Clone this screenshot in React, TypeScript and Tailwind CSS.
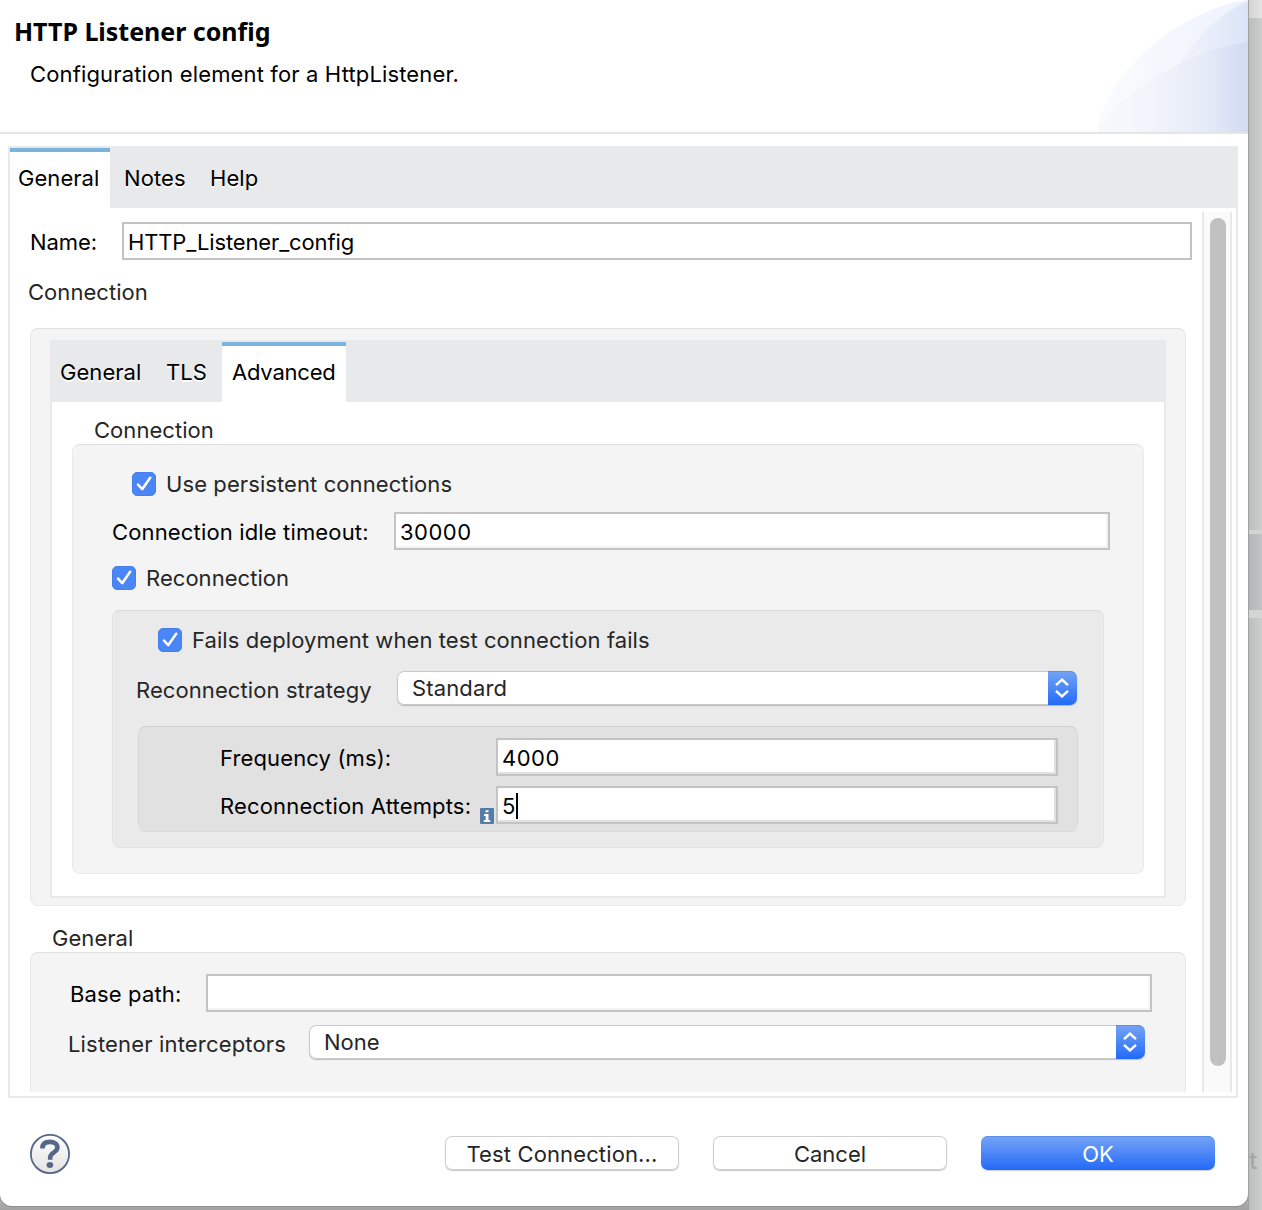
import React from "react";

function Check() {
  return (
    <span className="flex h-6 w-6 shrink-0 rounded-[5px] border border-[#4580ee] bg-[#4a86f5]">
      <svg viewBox="0 0 22 22" className="h-[22px] w-[22px]" fill="none">
        <path d="M5 13.3 L9.2 17.8 L17.2 6.6" transform="translate(0 -1)" stroke="#2f62c4" strokeOpacity="0.35" strokeWidth="2.6" strokeLinecap="round" strokeLinejoin="round" />
        <path d="M5 12.3 L9.2 16.8 L17.2 5.4" transform="translate(0 -0.6)" stroke="#fff" strokeWidth="2.6" strokeLinecap="round" strokeLinejoin="round" />
      </svg>
    </span>
  );
}

function Field({ className, inner, children }: { className: string; inner: string; children?: React.ReactNode }) {
  return (
    <div className={`flex h-[38px] shrink-0 border-2 border-[#c3c3c3] ${className}`}>
      <div className={`flex flex-1 items-center border-r-2 border-b-2 bg-white pt-1 pl-1 text-black ${inner}`}>{children}</div>
    </div>
  );
}

function Select({ className, children }: { className: string; children: React.ReactNode }) {
  return (
    <div className={`flex h-[34px] shrink-0 rounded-[7px] bg-white shadow-[0_1px_1px_rgba(0,0,0,0.22),inset_0_0_0_1px_#c9c9c9] ${className}`}>
      <div className="flex flex-1 items-center pl-[15px]">{children}</div>
      <div className="flex w-[29px] items-center justify-center rounded-r-[7px] bg-linear-to-b from-[#75a3f5] to-[#2169f7] shadow-[inset_0_1px_0_#5c8fe8]">
        <svg viewBox="0 0 14 20" className="mr-[1px] h-5 w-[14px]" fill="none" stroke="#fff" strokeWidth="2.4">
          <path d="M1 7.2 L7 1.6 L13 7.2 M1 12.8 L7 18.4 L13 12.8" />
        </svg>
      </div>
    </div>
  );
}

function Header() {
  return (
    <header className="flex h-[134px] shrink-0 justify-between border-b-2 border-[#e6e6e6]">
      <div className="text-black">
        <h1 className="mt-[13px] ml-[14px] h-9 font-['Noto_Sans'] text-[25px] leading-9 font-bold tracking-[-0.02px] whitespace-nowrap">HTTP Listener config</h1>
        <p className="mt-[11px] ml-[30px] h-7 leading-7 tracking-[0.14px] whitespace-nowrap">Configuration element for a HttpListener.</p>
      </div>
      <svg viewBox="0 0 150 132" className="h-[132px] w-[150px]">
        <defs>
          <linearGradient id="outer" x1="0" x2="1">
            <stop offset="0" stopColor="#fafbfd" />
            <stop offset="1" stopColor="#eef2fd" />
          </linearGradient>
          <linearGradient id="right" x1="0" x2="1">
            <stop offset="0" stopColor="#f4f6fc" />
            <stop offset="0.5" stopColor="#e9eefa" />
            <stop offset="1" stopColor="#dbe4f7" />
          </linearGradient>
          <linearGradient id="lower" x1="0" x2="1">
            <stop offset="0" stopColor="#f8fafc" />
            <stop offset="0.4" stopColor="#f0f3fa" />
            <stop offset="0.75" stopColor="#e3e9f7" />
            <stop offset="1" stopColor="#d1dbf2" />
          </linearGradient>
        </defs>
        <path d="M0 132 C0 85 75 10 150 0 V132 Z" fill="url(#outer)" />
        <path d="M150 1 C125 12 103 32 84 58 L70 132 H150 Z" fill="url(#right)" />
        <path d="M0 132 C0 125 5 118 14 110 C45 80 100 48 150 42 V132 Z" fill="url(#lower)" />
      </svg>
    </header>
  );
}

const group = "flex flex-col border border-[#e9e9e9] border-t-[#e0e0e0] bg-[#f4f4f4] rounded-[8px]";

function ReconnectionGroup() {
  return (
    <section className="mt-5 ml-[39px] flex h-[238px] w-[992px] flex-col rounded-[8px] border border-[#e3e3e3] border-t-[#d9d9d9] bg-[#eaeaea]">
      <div className="mt-[17px] ml-[45px] flex h-6 items-center gap-[10px]">
        <Check />
        <span className="tracking-[0.08px]">Fails deployment when test connection fails</span>
      </div>
      <div className="mt-[19px] ml-[23px] flex h-[34px]">
        <span className="mt-[5px] w-[261px] tracking-[0.09px]">Reconnection strategy</span>
        <Select className="w-[680px]"><span className="tracking-[0.15px]">Standard</span></Select>
      </div>
      <div className="mt-[21px] ml-[25px] flex h-[106px] w-[940px] flex-col rounded-[8px] border border-[#dadada] border-t-[#d0d0d0] bg-[#e1e1e1] text-black">
        <div className="mt-[11px] ml-[81px] flex h-[38px] items-center">
          <span className="w-[276px] pt-[2px] tracking-[0.13px]">Frequency (ms):</span>
          <Field className="w-[562px]" inner="border-[#e1e1e1]"><span className="tracking-[0.5px]">4000</span></Field>
        </div>
        <div className="mt-[10px] ml-[81px] flex h-[38px] items-center">
          <span className="w-[260px] pt-[2px] tracking-[0.16px]">Reconnection Attempts:</span>
          <svg viewBox="0 0 14 16" className="mt-[22px] mr-[2px] h-4 w-[14px]">
            <rect width="14" height="16" rx="1" fill="#557ba9" />
            <path d="M5.5 2.2h3v2h-3z M4 6h4.5v6h1.7v2H3.8v-2h1.9v-4H4z" fill="#fff" />
          </svg>
          <Field className="w-[562px]" inner="border-[#e1e1e1]"><span className="tracking-[0.5px]">5</span><span className="h-[26px] w-[2px] bg-black" /></Field>
        </div>
      </div>
    </section>
  );
}

function ConnectionGroup() {
  return (
    <section className={`mt-[22px] ml-5 h-[578px] w-[1156px] ${group}`}>
      <div className="mt-[11px] ml-[19px] flex h-[558px] w-[1116px] flex-col border-2 border-t-0 border-[#e8e9ea] bg-white">
        <nav className="-mx-[2px] flex h-[62px] shrink-0 bg-[#e8e9ea] pt-[2px] pl-[10px] leading-[56px] text-black">
          <span className="w-[106px] pt-[2px] tracking-[0.05px] [text-shadow:0_2px_0_#fff]">General</span>
          <span className="w-[56px] pt-[2px] tracking-[0px] [text-shadow:0_2px_0_#fff]">TLS</span>
          <span className="w-[124px] border-t-4 border-[#7ab4da] bg-white pl-[10px] leading-[52px] tracking-[-0.2px]">Advanced</span>
        </nav>
        <h3 className="mt-[14px] ml-[42px] h-7 tracking-[0.05px]">Connection</h3>
        <section className={`ml-5 h-[430px] w-[1072px] ${group}`}>
          <div className="mt-[27px] ml-[59px] flex h-6 items-center gap-[10px]">
            <Check />
            <span className="tracking-[0.09px]">Use persistent connections</span>
          </div>
          <div className="mt-4 ml-[39px] flex h-[38px] items-center text-black">
            <span className="w-[282px] pt-[2px] tracking-[0.15px]">Connection idle timeout:</span>
            <Field className="w-[716px]" inner="border-[#f4f4f4]"><span className="tracking-[0.5px]">30000</span></Field>
          </div>
          <div className="mt-4 ml-[39px] flex h-6 items-center gap-[10px]">
            <Check />
            <span className="tracking-[0.05px]">Reconnection</span>
          </div>
          <ReconnectionGroup />
        </section>
      </div>
    </section>
  );
}

function GeneralGroup() {
  return (
    <>
      <h2 className="mt-[18px] ml-[42px] h-7 tracking-[0.05px]">General</h2>
      <section className={`ml-5 h-[144px] w-[1156px] ${group}`}>
        <div className="mt-[21px] ml-[39px] flex h-[38px] items-center text-black">
          <span className="w-[136px] pt-[2px] tracking-[0.15px]">Base path:</span>
          <Field className="w-[946px]" inner="border-[#f4f4f4]" />
        </div>
        <div className="mt-[13px] ml-[37px] flex h-[34px]">
          <span className="mt-[5px] w-[241px] tracking-[0.17px]">Listener interceptors</span>
          <Select className="w-[836px]"><span className="tracking-[0px]">None</span></Select>
        </div>
      </section>
    </>
  );
}

function Footer() {
  const plain = "flex h-[34px] w-[234px] items-center justify-center rounded-[7px] bg-white pt-[2px] shadow-[0_1px_1px_rgba(0,0,0,0.22),inset_0_0_0_1px_#cfcfcf]";
  return (
    <footer className="mt-9 flex h-10 pl-[30px]">
      <button className="mr-[375px] h-10 w-10">
        <svg viewBox="0 0 40 40" className="h-10 w-10" fill="none">
          <defs>
            <linearGradient id="help" x1="0" y1="0" x2="0" y2="1">
              <stop offset="0" stopColor="#fff" />
              <stop offset="1" stopColor="#e2e2e2" />
            </linearGradient>
          </defs>
          <circle cx="20" cy="20" r="19.1" fill="url(#help)" stroke="#566787" strokeWidth="1.8" />
          <path d="M12.4 14.6 C12.4 9.8 15.6 7.9 19.8 7.9 C24.4 7.9 27.4 10 27.4 13.6 C27.4 18.6 20.2 18.6 20.2 23.2 V25.8" stroke="#566787" strokeWidth="4.6" />
          <ellipse cx="19.9" cy="31" rx="3.3" ry="2.9" fill="#566787" />
        </svg>
      </button>
      <div className="flex gap-[34px] pt-[2px]">
        <button className={plain}><span className="tracking-[0.13px]">Test Connection...</span></button>
        <button className={plain}><span className="tracking-[0px]">Cancel</span></button>
        <button className="flex h-[34px] w-[234px] items-center justify-center rounded-[7px] bg-linear-to-b from-[#75a3f5] to-[#2169f7] pt-[2px] text-white shadow-[0_1px_1px_rgba(0,0,0,0.2),inset_0_1px_0_#5c8fe8]"><span>OK</span></button>
      </div>
    </footer>
  );
}

function Backdrop() {
  return (
    <aside className="flex w-[14px] flex-col border-l border-[#a0a1a1] bg-linear-to-r from-[#bcbdbd] to-[#cccdcd] text-[#a5a6a6]">
      <div className="h-[18px] bg-linear-to-r from-[#d4d4d4] to-[#e4e4e4]" />
      <div className="mt-[512px] h-1 bg-[#d3d3d4]" />
      <div className="h-[76px] bg-linear-to-r from-[#b4b5b9] to-[#c3c4c8]" />
      <div className="h-2 bg-[#d5d5d5]" />
      <span className="mt-[529px] h-7 text-[24px] leading-7 font-medium">t</span>
    </aside>
  );
}

export default function App() {
  return (
    <div className="flex h-[1210px] w-[1262px] overflow-hidden bg-[#a5a6a6] font-[Inter,sans-serif] text-[22px] leading-7 whitespace-nowrap text-[#262626]">
      <div className="h-[1210px] w-[1248px] bg-linear-to-b from-[#bcbdbd] from-98% to-[#a2a2a2]">
        <main className="flex h-[1206px] flex-col rounded-b-[12px] bg-white shadow-[0_0_0_1px_#8f9090]">
          <Header />
          <div className="mt-3 ml-2 flex h-[952px] w-[1230px] shrink-0 flex-col border-2 border-t-0 border-[#e8e9ea]">
            <nav className="-mx-[2px] flex h-[62px] shrink-0 bg-[#e8e9ea] pt-[2px] pl-[2px] leading-[56px] text-black">
              <span className="w-[100px] border-t-4 border-[#7ab4da] bg-white pl-2 leading-[52px] tracking-[0.05px]">General</span>
              <span className="w-[86px] pt-[2px] pl-[14px] tracking-[0.1px] [text-shadow:0_2px_0_#fff]">Notes</span>
              <span className="pt-[2px] pl-[14px] tracking-[0.05px] [text-shadow:0_2px_0_#fff]">Help</span>
            </nav>
            <div className="flex pt-1">
              <div className="h-[880px] w-[1192px] overflow-hidden">
                <div className="mt-[10px] ml-5 flex h-[38px] items-center text-black">
                  <span className="w-[92px] pt-[2px] tracking-[-0.1px]">Name:</span>
                  <Field className="w-[1070px]" inner="border-white"><span className="tracking-[-0.13px]">HTTP_Listener_config</span></Field>
                </div>
                <h2 className="mt-[18px] ml-[18px] h-7 tracking-[0.05px]">Connection</h2>
                <ConnectionGroup />
                <GeneralGroup />
              </div>
              <div className="flex h-[880px] w-[30px] border-x-2 border-[#e9e9e9] bg-[#fafafa] pt-[6px] pl-[6px]">
                <div className="h-[848px] w-4 rounded-full bg-[#c1c1c1]" />
              </div>
            </div>
          </div>
          <Footer />
        </main>
      </div>
      <Backdrop />
    </div>
  );
}
